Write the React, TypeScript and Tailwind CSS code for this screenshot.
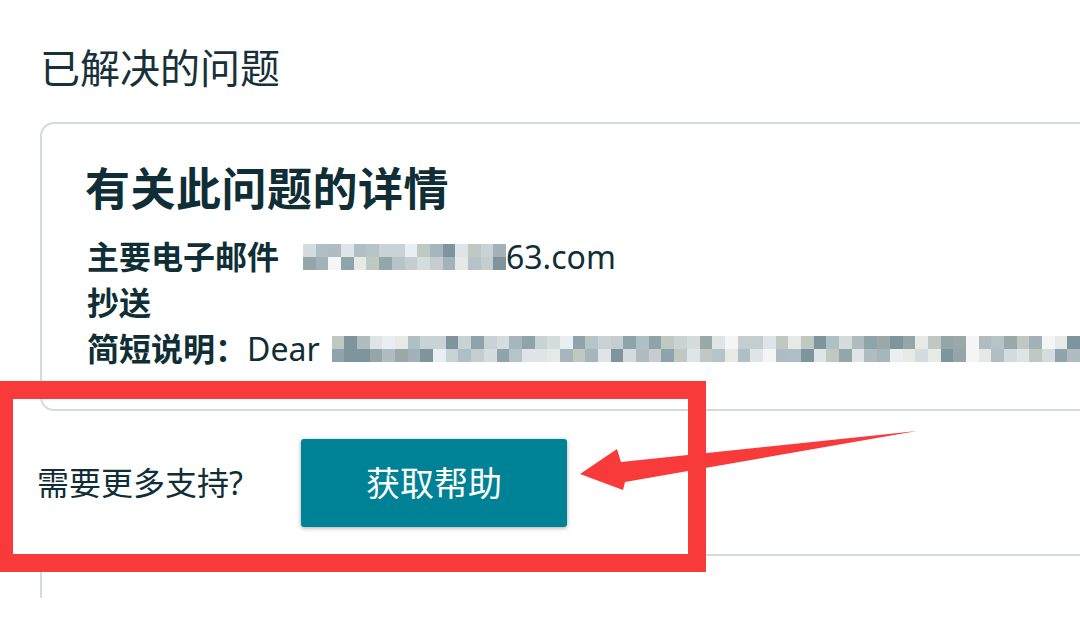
import React from "react";

const palette = [
  "#c9d3d6", "#a6b6bc", "#8fa3ab", "#b7c4c7", "#d4dcde", "#9aa8a8", "#e6e9e6",
  "#7f959e", "#b0bcbf", "#c5cdd0", "#e8eef2", "#a3b2b8", "#bfc9c2", "#94a6a8",
  "#dfe5e6", "#aebfc6",
];

function makeRows(cols: number, seed: number): string[][] {
  let s = seed;
  const rnd = () => {
    s = (s * 1103515245 + 12345) % 2147483648;
    return s / 2147483648;
  };
  const rows: string[][] = [];
  for (let r = 0; r < 2; r++) {
    const row: string[] = [];
    for (let c = 0; c < cols; c++) {
      const v = rnd();
      if (v < 0.06) row.push("#f4f6f6");
      else row.push(palette[Math.floor(rnd() * palette.length)]);
    }
    rows.push(row);
  }
  return rows;
}

function Mosaic({ cols, seed }: { cols: number; seed: number }) {
  const rows = makeRows(cols, seed);
  return (
    <span className="inline-flex flex-col align-middle">
      {rows.map((row, i) => (
        <span key={i} className="flex">
          {row.map((c, j) => (
            <span
              key={j}
              className="block w-[12.7px] h-[13px]"
              style={{ backgroundColor: c }}
            />
          ))}
        </span>
      ))}
    </span>
  );
}

export default function App() {
  return (
    <div
      className="relative w-[1080px] h-[637px] overflow-hidden bg-white text-[#0f2e35]"
      style={{ fontFamily: '"Noto Sans", "Noto Sans CJK SC", sans-serif' }}
    >
      <div className="pl-[40px] pt-[44px]">
        <h1 className="text-[40px] leading-[48px] font-normal text-[#16313a]">已解决的问题</h1>

        <div className="mt-[30px] w-[1100px] h-[289px] border-2 border-[#d5dbdb] rounded-[14px] pl-[43px] pt-[37px]">
          <h2 className="text-[45px] leading-[56px] font-bold tracking-[0.5px]">有关此问题的详情</h2>
          <div className="mt-[17px] text-[32px] leading-[46px] pl-[2px]">
            <div className="flex items-center whitespace-nowrap">
              <span className="font-bold">主要电子邮件</span>
              <span className="ml-[24px] flex items-center">
                <Mosaic cols={16} seed={7} />
              </span>
              <span>63.com</span>
            </div>
            <div className="font-bold">抄送</div>
            <div className="flex items-center whitespace-nowrap">
              <span className="font-bold">简短说明：</span>
              <span>Dear</span>
              <span className="ml-[12px] flex items-center">
                <Mosaic cols={60} seed={31} />
              </span>
            </div>
          </div>
        </div>
      </div>

      <div className="pl-[37px] mt-[28px] flex items-center gap-[58px]">
        <span className="text-[32px] leading-[40px]">需要更多支持?</span>
        <button className="w-[266px] h-[88px] rounded-[3px] bg-[#008296] text-white text-[34px] shadow-[0_1px_4px_rgba(0,0,0,0.35)]">
          获取帮助
        </button>
      </div>

      <div className="ml-[40px] mt-[27px] w-[1100px] h-[44px] border-t-2 border-l-2 border-[#d5dbdb] rounded-tl-[14px]" />

      <div className="absolute left-[-5px] top-[381px] w-[711px] h-[191px] border-[18px] border-[#f93a3a]" />

      <svg className="absolute left-0 top-0" width="1080" height="637" viewBox="0 0 1080 637">
        <polygon
          points="580,474 617,449 621,462 917,431 625,482 623,490"
          fill="#f93a3a"
        />
      </svg>
    </div>
  );
}
